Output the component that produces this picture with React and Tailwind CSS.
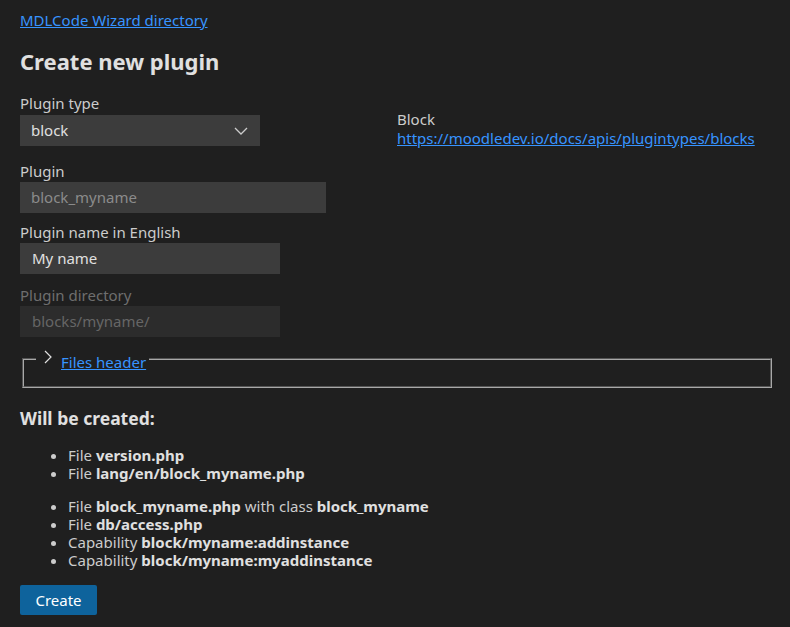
const font = { fontFamily: '"Noto Sans", "Open Sans", sans-serif' };

function Field({ label, children, disabled, className }) {
  return (
    <div className={className}>
      <div className={`leading-[18px] ${disabled ? "text-[#6e6e6e]" : "text-[#cccccc]"}`}>{label}</div>
      {children}
    </div>
  );
}

export default function App() {
  return (
    <div
      className="min-h-screen bg-[#1f1f1f] text-[#cccccc] text-[15px] px-5 pt-[11px] pb-3"
      style={font}
    >
      <a href="#" className="text-[#3794ff] underline leading-[18px] block w-fit">
        MDLCode Wizard directory
      </a>
      <h1 className="text-[22px] font-bold text-[#e0e0e0] leading-[30px] mt-[17px]">
        Create new plugin
      </h1>

      <div className="flex mt-[18px]">
        <div className="w-[377px] shrink-0">
          <Field label="Plugin type">
            <div className="mt-[3px] w-[240px] h-[31px] bg-[#3c3c3c] flex items-center justify-between pl-[11px] pr-[12px] text-[#e0e0e0]">
              <span>block</span>
              <svg width="14" height="8" viewBox="0 0 14 8" fill="none" stroke="#cccccc" strokeWidth="1.3">
                <path d="M1 1 L7 7 L13 1" />
              </svg>
            </div>
          </Field>

          <Field label="Plugin" className="mt-4">
            <div className="mt-[2px] w-[306px] h-[31px] bg-[#3c3c3c] flex items-center pl-[11px] text-[#8b8b8b]">
              block_myname
            </div>
          </Field>

          <Field label="Plugin name in English" className="mt-[10px]">
            <div className="mt-[2px] w-[260px] h-[31px] bg-[#3c3c3c] flex items-center pl-3 text-[#e0e0e0]">
              My name
            </div>
          </Field>

          <Field label="Plugin directory" disabled className="mt-3">
            <div className="mt-[2px] w-[260px] h-[31px] bg-[#2c2c2c] flex items-center pl-3 text-[#666666]">
              blocks/myname/
            </div>
          </Field>
        </div>

        <div className="pt-4 leading-[19px]">
          <div className="text-[#cccccc]">Block</div>
          <a href="#" className="text-[#3794ff] underline">
            https://moodledev.io/docs/apis/plugintypes/blocks
          </a>
        </div>
      </div>

      <fieldset className="ml-[2px] w-[750px] mt-[13px] border-2 border-[#a8a8a8] [border-style:groove] px-3 py-0 min-w-0">
        <legend className="h-[18px] flex items-start pr-[3px]">
          <svg width="8" height="14" viewBox="0 0 8 14" fill="none" stroke="#e0e0e0" strokeWidth="1.2" className="ml-[8px] mr-[9px] mt-[0px]">
            <path d="M1 1 L7 7 L1 13" />
          </svg>
          <a href="#" className="text-[#3794ff] underline leading-[18px] mt-[3px]">Files header</a>
        </legend>
        <div className="h-[18px]" />
      </fieldset>

      <h2 className="text-[17.5px] font-bold text-[#e0e0e0] leading-[24px] mt-[18px]">
        Will be created:
      </h2>

      <ul className="list-disc pl-[48px] mt-[16px] leading-[18px]">
        <li>File <b className="text-[#e0e0e0]">version.php</b></li>
        <li>File <b className="text-[#e0e0e0]">lang/en/block_myname.php</b></li>
      </ul>
      <ul className="list-disc pl-[48px] mt-[15px] leading-[18px]">
        <li>
          File <b className="text-[#e0e0e0]">block_myname.php</b> with class{" "}
          <b className="text-[#e0e0e0]">block_myname</b>
        </li>
        <li>File <b className="text-[#e0e0e0]">db/access.php</b></li>
        <li>Capability <b className="text-[#e0e0e0]">block/myname:addinstance</b></li>
        <li>Capability <b className="text-[#e0e0e0]">block/myname:myaddinstance</b></li>
      </ul>

      <button className="mt-4 w-[77px] h-[30px] bg-[#0e639c] text-white text-[15px] rounded-[2px]">
        Create
      </button>
    </div>
  );
}
